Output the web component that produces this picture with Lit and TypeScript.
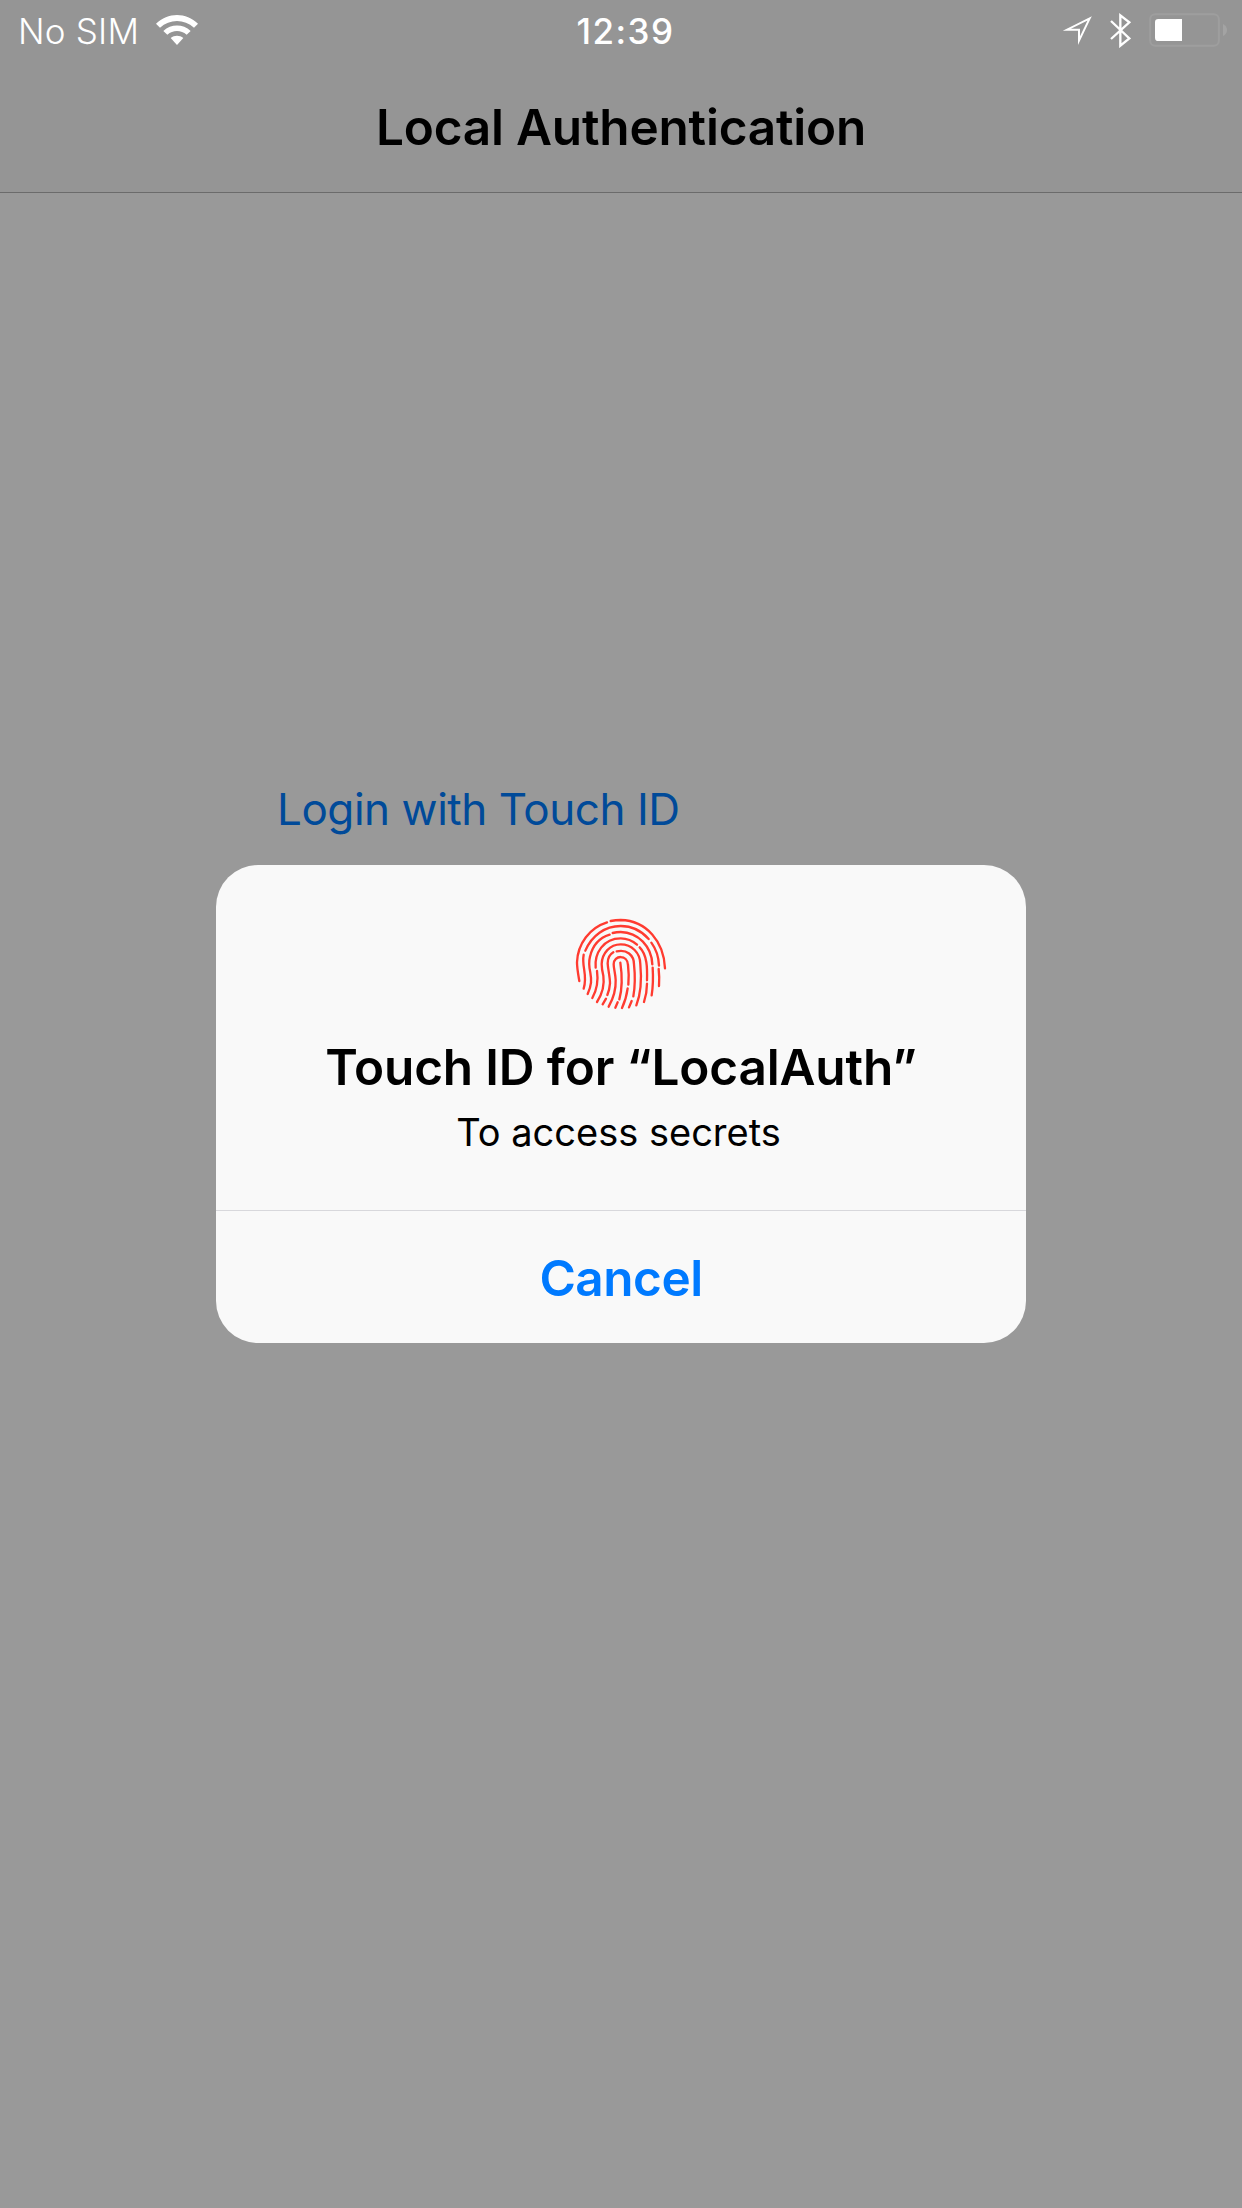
import { LitElement, html, css, svg } from "lit";
import { customElement } from "lit/decorators.js";

const RIDGES = [
  "M58 228C54 205 51 190 51 172C53 115 90 68 141 52",
  "M152 48C162 46 172 45 182 45C260 47 312 110 315 190",
  "M76 137C95 92 135 63 182 63C215 63 245 78 266 102",
  "M274 113C288 132 296 155 297 182",
  "M296 192C298 210 298 228 297 243",
  "M71 149C64 185 84 210 71 251",
  "M83 267C95 240 95 225 91 203C87 185 86 170 90 155C98 120 120 98 149 89",
  "M158 84C166 82 174 81 182 81C235 82 275 125 277 178",
  "M278 188C280 220 279 245 275 271",
  "M107 188C103 145 130 100 182 100C200 100 218 107 231 119",
  "M239 127C262 150 262 190 261 226",
  "M261 236C261 255 257 275 252 291",
  "M111 198C115 225 113 250 97 279",
  "M111 291C130 262 134 240 130 212C127 200 125 190 125 177C126 145 150 118 182 118C215 118 241 143 241 178C246 230 241 270 229 301",
  "M160 142C148 149 143 160 143 175C144 195 150 215 150 235C149 250 146 260 142 270",
  "M138 281L128 298",
  "M170 139C200 132 222 150 222 178C226 215 226 240 220 274",
  "M215 288L207 307",
  "M146 305C160 280 168 250 167 225C166 205 161 190 161 178C161 149 203 148 204 180C207 205 207 220 205 239",
  "M203 250C200 272 195 290 186 309",
  "M181 173C185 200 190 240 178 283",
  "M173 292L166 308",
];

@customElement("status-bar")
export class StatusBar extends LitElement {
  static styles = css`
    :host {
      display: grid;
      grid-template-columns: 1fr auto 1fr;
      align-items: center;
      height: 60px;
      color: #fff;
      font-size: 35px;
      line-height: 60px;
    }
    .carrier {
      display: flex;
      align-items: center;
      gap: 16px;
      padding-left: 18px;
      font-weight: 300;
      letter-spacing: 0.2px;
    }
    .time {
      font-weight: 500;
      letter-spacing: 1.5px;
      padding-left: 9px;
    }
    .label {
      position: relative;
      top: 1px;
    }
    .icons {
      display: flex;
      justify-content: flex-end;
      align-items: center;
      padding-right: 14px;
    }
    svg {
      display: block;
      height: 36px;
    }
    .wifi {
      width: 44px;
    }
    .location {
      width: 31px;
      margin-right: 17px;
    }
    .bluetooth {
      width: 22px;
      margin-right: 16px;
    }
    .battery {
      width: 80px;
    }
  `;

  render() {
    return html`
      <div class="carrier">
        <span class="label">No SIM</span>
        <svg class="wifi" viewBox="465 36 132 108" fill="#fff">
          <path d="M468 71C503 36 559 36 594 71L582 83C553 56 509 56 480 83Z" />
          <path d="M490 93C513 71 549 71 572 93L560 104C543 89 519 89 502 104Z" />
          <path d="M512 114C523 105 539 105 550 114L531 135Z" />
        </svg>
      </div>
      <span class="time label">12:39</span>
      <div class="icons">
        <svg class="location" viewBox="66 36 93 108" fill="none" stroke="#fff" stroke-width="6" stroke-miterlimit="20">
          <path d="M149 55L117 122V89H81Z" />
        </svg>
        <svg class="bluetooth" viewBox="210 36 66 108" fill="none" stroke="#fff" stroke-width="7">
          <path d="M213 63L268 115L241 137V46L268 67L213 117" />
        </svg>
        <svg class="battery" viewBox="324 36 240 108">
          <rect x="330.500" y="42.500" width="206" height="95" rx="15" fill="none" stroke="#9e9e9e" stroke-width="6" />
          <path d="M355 57H426V123H355Q345 123 345 113V67Q345 57 355 57Z" fill="#fff" />
          <path d="M549 72Q561 78 561 90Q561 102 549 108Z" fill="#a3a3a3" />
        </svg>
      </div>
    `;
  }
}

@customElement("touch-id-dialog")
export class TouchIdDialog extends LitElement {
  static styles = css`
    :host {
      display: flex;
      flex-direction: column;
      width: 810px;
      height: 478px;
      border-radius: 42px;
      background: #f9f9f9;
      color: #000;
      overflow: hidden;
      text-align: center;
    }
    .message {
      display: flex;
      flex-direction: column;
      align-items: center;
      height: 346px;
      padding-top: 40px;
      box-sizing: border-box;
      border-bottom: 1px solid #d8d8dc;
    }
    svg {
      display: block;
      width: 120px;
      height: 120px;
      margin-right: 2px;
    }
    .title {
      margin-top: 12px;
      font-size: 49.5px;
      line-height: 60px;
      font-weight: 600;
      letter-spacing: -0.15px;
    }
    .reason {
      margin-top: 11px;
      padding-right: 5px;
      font-size: 38px;
      line-height: 48px;
    }
    .cancel {
      flex: 1;
      border: 0;
      padding: 1px 0 0;
      background: none;
      font: inherit;
      font-size: 49.5px;
      font-weight: 600;
      letter-spacing: -0.5px;
      color: #007aff;
    }
  `;

  render() {
    return html`
      <div class="message">
        <svg viewBox="0 0 360 360" fill="none" stroke="#ff3b30" stroke-width="7" stroke-linecap="round">
          ${RIDGES.map((d) => svg`<path d=${d} />`)}
        </svg>
        <div class="title">Touch ID for “LocalAuth”</div>
        <div class="reason">To access secrets</div>
      </div>
      <button class="cancel">Cancel</button>
    `;
  }
}

@customElement("app-root")
export class AppRoot extends LitElement {
  static styles = css`
    :host {
      display: block;
      position: relative;
      width: 1242px;
      height: 2208px;
      overflow: hidden;
      background: #999;
      font-family: Inter, "Liberation Sans", sans-serif;
    }
    .nav {
      height: 193px;
      box-sizing: border-box;
      background: #959595;
      border-bottom: 1px solid #6b6b6b;
    }
    .heading {
      margin: 0;
      padding-top: 37px;
      text-align: center;
      font-size: 49.5px;
      line-height: 60px;
      font-weight: 600;
      letter-spacing: -0.2px;
      color: #000;
    }
    .login {
      display: block;
      margin: 586px 0 0 277px;
      padding: 0;
      border: 0;
      background: none;
      font: inherit;
      font-size: 44px;
      line-height: 60px;
      letter-spacing: -0.45px;
      color: #004a99;
    }
    .overlay {
      position: absolute;
      inset: 0;
      display: flex;
      align-items: center;
      justify-content: center;
    }
  `;

  render() {
    return html`
      <header class="nav">
        <status-bar></status-bar>
        <h1 class="heading">Local Authentication</h1>
      </header>
      <button class="login">Login with Touch ID</button>
      <div class="overlay">
        <touch-id-dialog></touch-id-dialog>
      </div>
    `;
  }
}
